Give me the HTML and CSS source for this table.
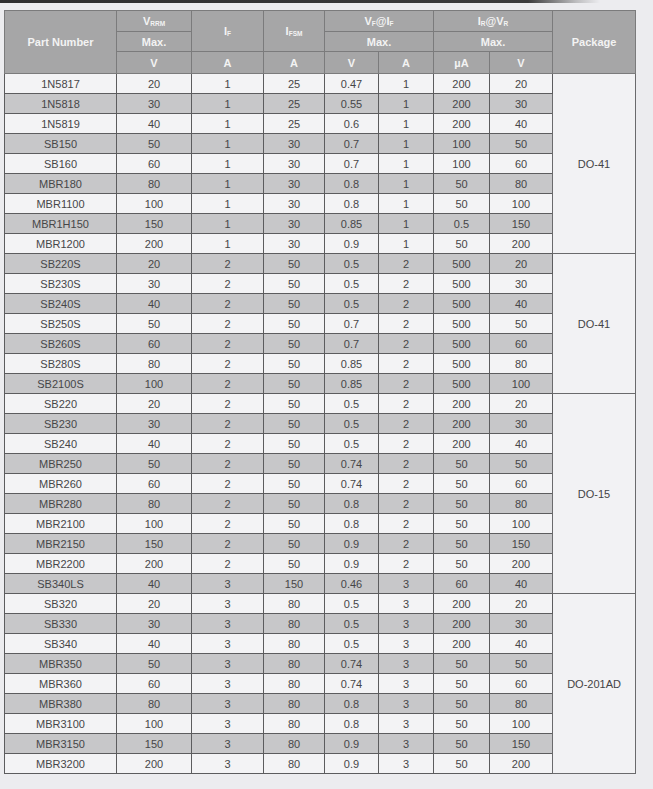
FILE: index.html
```html
<!DOCTYPE html>
<html>
<head>
<meta charset="utf-8">
<link rel="stylesheet" href="styles.css">
</head>
<body>
<div class="page">
  <div class="topline"></div>
  <table class="spec">
    <colgroup>
      <col class="c-part"><col class="c-vrrm"><col class="c-if"><col class="c-ifsm"><col class="c-vf"><col class="c-fa"><col class="c-ua"><col class="c-vr"><col class="c-pkg">
    </colgroup>
    <thead>
      <tr class="h1">
        <th rowspan="3">Part Number</th>
        <th>V<span class="sub">RRM</span></th>
        <th rowspan="2">I<span class="sub">F</span></th>
        <th rowspan="2">I<span class="sub">FSM</span></th>
        <th colspan="2">V<span class="sub">F</span>@I<span class="sub">F</span></th>
        <th colspan="2">I<span class="sub">R</span>@V<span class="sub">R</span></th>
        <th rowspan="3">Package</th>
      </tr>
      <tr class="h2">
        <th>Max.</th>
        <th colspan="2">Max.</th>
        <th colspan="2">Max.</th>
      </tr>
      <tr class="h3">
        <th>V</th><th>A</th><th>A</th><th>V</th><th>A</th><th>µA</th><th>V</th>
      </tr>
    </thead>
    <tbody>
      <tr><td>1N5817</td><td>20</td><td>1</td><td>25</td><td>0.47</td><td>1</td><td>200</td><td>20</td><td class="pkg" rowspan="9">DO-41</td></tr>
      <tr class="g"><td>1N5818</td><td>30</td><td>1</td><td>25</td><td>0.55</td><td>1</td><td>200</td><td>30</td></tr>
      <tr><td>1N5819</td><td>40</td><td>1</td><td>25</td><td>0.6</td><td>1</td><td>200</td><td>40</td></tr>
      <tr class="g"><td>SB150</td><td>50</td><td>1</td><td>30</td><td>0.7</td><td>1</td><td>100</td><td>50</td></tr>
      <tr><td>SB160</td><td>60</td><td>1</td><td>30</td><td>0.7</td><td>1</td><td>100</td><td>60</td></tr>
      <tr class="g"><td>MBR180</td><td>80</td><td>1</td><td>30</td><td>0.8</td><td>1</td><td>50</td><td>80</td></tr>
      <tr><td>MBR1100</td><td>100</td><td>1</td><td>30</td><td>0.8</td><td>1</td><td>50</td><td>100</td></tr>
      <tr class="g"><td>MBR1H150</td><td>150</td><td>1</td><td>30</td><td>0.85</td><td>1</td><td>0.5</td><td>150</td></tr>
      <tr><td>MBR1200</td><td>200</td><td>1</td><td>30</td><td>0.9</td><td>1</td><td>50</td><td>200</td></tr>

      <tr class="g"><td>SB220S</td><td>20</td><td>2</td><td>50</td><td>0.5</td><td>2</td><td>500</td><td>20</td><td class="pkg" rowspan="7">DO-41</td></tr>
      <tr><td>SB230S</td><td>30</td><td>2</td><td>50</td><td>0.5</td><td>2</td><td>500</td><td>30</td></tr>
      <tr class="g"><td>SB240S</td><td>40</td><td>2</td><td>50</td><td>0.5</td><td>2</td><td>500</td><td>40</td></tr>
      <tr><td>SB250S</td><td>50</td><td>2</td><td>50</td><td>0.7</td><td>2</td><td>500</td><td>50</td></tr>
      <tr class="g"><td>SB260S</td><td>60</td><td>2</td><td>50</td><td>0.7</td><td>2</td><td>500</td><td>60</td></tr>
      <tr><td>SB280S</td><td>80</td><td>2</td><td>50</td><td>0.85</td><td>2</td><td>500</td><td>80</td></tr>
      <tr class="g"><td>SB2100S</td><td>100</td><td>2</td><td>50</td><td>0.85</td><td>2</td><td>500</td><td>100</td></tr>

      <tr><td>SB220</td><td>20</td><td>2</td><td>50</td><td>0.5</td><td>2</td><td>200</td><td>20</td><td class="pkg" rowspan="10">DO-15</td></tr>
      <tr class="g"><td>SB230</td><td>30</td><td>2</td><td>50</td><td>0.5</td><td>2</td><td>200</td><td>30</td></tr>
      <tr><td>SB240</td><td>40</td><td>2</td><td>50</td><td>0.5</td><td>2</td><td>200</td><td>40</td></tr>
      <tr class="g"><td>MBR250</td><td>50</td><td>2</td><td>50</td><td>0.74</td><td>2</td><td>50</td><td>50</td></tr>
      <tr><td>MBR260</td><td>60</td><td>2</td><td>50</td><td>0.74</td><td>2</td><td>50</td><td>60</td></tr>
      <tr class="g"><td>MBR280</td><td>80</td><td>2</td><td>50</td><td>0.8</td><td>2</td><td>50</td><td>80</td></tr>
      <tr><td>MBR2100</td><td>100</td><td>2</td><td>50</td><td>0.8</td><td>2</td><td>50</td><td>100</td></tr>
      <tr class="g"><td>MBR2150</td><td>150</td><td>2</td><td>50</td><td>0.9</td><td>2</td><td>50</td><td>150</td></tr>
      <tr><td>MBR2200</td><td>200</td><td>2</td><td>50</td><td>0.9</td><td>2</td><td>50</td><td>200</td></tr>
      <tr class="g"><td>SB340LS</td><td>40</td><td>3</td><td>150</td><td>0.46</td><td>3</td><td>60</td><td>40</td></tr>

      <tr><td>SB320</td><td>20</td><td>3</td><td>80</td><td>0.5</td><td>3</td><td>200</td><td>20</td><td class="pkg" rowspan="9">DO-201AD</td></tr>
      <tr class="g"><td>SB330</td><td>30</td><td>3</td><td>80</td><td>0.5</td><td>3</td><td>200</td><td>30</td></tr>
      <tr><td>SB340</td><td>40</td><td>3</td><td>80</td><td>0.5</td><td>3</td><td>200</td><td>40</td></tr>
      <tr class="g"><td>MBR350</td><td>50</td><td>3</td><td>80</td><td>0.74</td><td>3</td><td>50</td><td>50</td></tr>
      <tr><td>MBR360</td><td>60</td><td>3</td><td>80</td><td>0.74</td><td>3</td><td>50</td><td>60</td></tr>
      <tr class="g"><td>MBR380</td><td>80</td><td>3</td><td>80</td><td>0.8</td><td>3</td><td>50</td><td>80</td></tr>
      <tr><td>MBR3100</td><td>100</td><td>3</td><td>80</td><td>0.8</td><td>3</td><td>50</td><td>100</td></tr>
      <tr class="g"><td>MBR3150</td><td>150</td><td>3</td><td>80</td><td>0.9</td><td>3</td><td>50</td><td>150</td></tr>
      <tr><td>MBR3200</td><td>200</td><td>3</td><td>80</td><td>0.9</td><td>3</td><td>50</td><td>200</td></tr>
    </tbody>
  </table>
</div>
</body>
</html>
```
FILE: styles.css
```css
html, body {
  margin: 0;
  padding: 0;
}
body {
  background: #ececef;
  font-family: "Liberation Sans", Arial, sans-serif;
  width: 653px;
  height: 789px;
  overflow: hidden;
}
.page {
  padding-left: 4px;
}
.topline {
  height: 3px;
  width: 600px;
  margin-left: -4px;
  background: linear-gradient(to right, #2f2f30 0%, #3b3b3c 88%, rgba(80, 80, 80, 0.3) 96%, rgba(80, 80, 80, 0) 100%);
}
.spec {
  border-collapse: collapse;
  table-layout: fixed;
  width: 631px;
  margin-top: 7px;
}
.c-part { width: 112px; }
.c-vrrm { width: 75px; }
.c-if { width: 72px; }
.c-ifsm { width: 61px; }
.c-vf { width: 54px; }
.c-fa { width: 55px; }
.c-ua { width: 56px; }
.c-vr { width: 63px; }
.c-pkg { width: 83px; }

.spec th {
  background: #a6a6a7;
  color: #f3f3f3;
  font-weight: bold;
  font-size: 11px;
  border: 1px solid #7b7b7c;
  padding: 0;
  text-align: center;
  vertical-align: middle;
}
.h1 { height: 21px; }
.h2 { height: 20px; }
.h3 { height: 22px; }
.sub {
  font-size: 6.5px;
  vertical-align: -1px;
}
.spec td {
  background: #f3f3f5;
  color: #464648;
  font-size: 11px;
  border: 1px solid #5c5c5e;
  padding: 0;
  text-align: center;
  vertical-align: middle;
}
.spec tbody tr {
  height: 20px;
}
.spec tbody tr.g td {
  background: #c7c7c9;
}
.spec tbody tr td.pkg {
  background: #f2f2f4;
  color: #444446;
  border-color: #6a6a6c;
}
```
